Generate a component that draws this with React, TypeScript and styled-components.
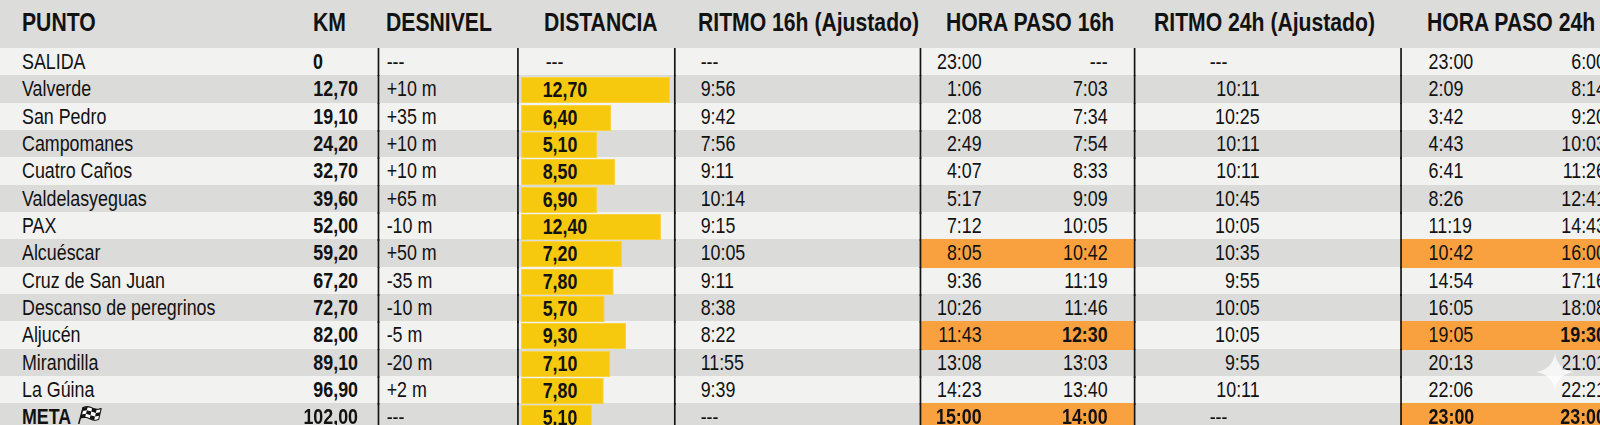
import React from 'react';
import styled, { createGlobalStyle, css } from 'styled-components';

// The printed table uses a condensed grotesque. No condensed face is installed,
// so the table is laid out wide and squeezed horizontally by S.
const S = 0.83;
const u = (px: number) => `${(px / S).toFixed(2)}px`;

const GlobalStyle = createGlobalStyle`
  body {
    margin: 0;
    background: #f2f2f1;
    overflow: hidden;
    font-family: "Liberation Sans", Arial, sans-serif;
    color: #121212;
  }
`;

interface Leg {
  name: string;
  km: string;
  des: string;
  dist?: string;
  bar?: number;
  r16: string;
  h16: [string, string];
  r24: string;
  h24: [string, string];
  hl?: boolean;
  bold?: [boolean, boolean];
  meta?: boolean;
}

const legs: Leg[] = [
  { name: 'SALIDA', km: '0', des: '---', r16: '---', h16: ['23:00', '---'], r24: '---', h24: ['23:00', '6:00'] },
  { name: 'Valverde', km: '12,70', des: '+10 m', dist: '12,70', bar: 148, r16: '9:56', h16: ['1:06', '7:03'], r24: '10:11', h24: ['2:09', '8:14'] },
  { name: 'San Pedro', km: '19,10', des: '+35 m', dist: '6,40', bar: 89, r16: '9:42', h16: ['2:08', '7:34'], r24: '10:25', h24: ['3:42', '9:20'] },
  { name: 'Campomanes', km: '24,20', des: '+10 m', dist: '5,10', bar: 75, r16: '7:56', h16: ['2:49', '7:54'], r24: '10:11', h24: ['4:43', '10:03'] },
  { name: 'Cuatro Caños', km: '32,70', des: '+10 m', dist: '8,50', bar: 93, r16: '9:11', h16: ['4:07', '8:33'], r24: '10:11', h24: ['6:41', '11:26'] },
  { name: 'Valdelasyeguas', km: '39,60', des: '+65 m', dist: '6,90', bar: 75, r16: '10:14', h16: ['5:17', '9:09'], r24: '10:45', h24: ['8:26', '12:41'] },
  { name: 'PAX', km: '52,00', des: '-10 m', dist: '12,40', bar: 139, r16: '9:15', h16: ['7:12', '10:05'], r24: '10:05', h24: ['11:19', '14:43'] },
  { name: 'Alcuéscar', km: '59,20', des: '+50 m', dist: '7,20', bar: 100, r16: '10:05', h16: ['8:05', '10:42'], r24: '10:35', h24: ['10:42', '16:00'], hl: true },
  { name: 'Cruz de San Juan', km: '67,20', des: '-35 m', dist: '7,80', bar: 92, r16: '9:11', h16: ['9:36', '11:19'], r24: '9:55', h24: ['14:54', '17:16'] },
  { name: 'Descanso de peregrinos', km: '72,70', des: '-10 m', dist: '5,70', bar: 83, r16: '8:38', h16: ['10:26', '11:46'], r24: '10:05', h24: ['16:05', '18:08'] },
  { name: 'Aljucén', km: '82,00', des: '-5 m', dist: '9,30', bar: 104, r16: '8:22', h16: ['11:43', '12:30'], r24: '10:05', h24: ['19:05', '19:30'], hl: true, bold: [false, true] },
  { name: 'Mirandilla', km: '89,10', des: '-20 m', dist: '7,10', bar: 88, r16: '11:55', h16: ['13:08', '13:03'], r24: '9:55', h24: ['20:13', '21:01'] },
  { name: 'La Gúina', km: '96,90', des: '+2 m', dist: '7,80', bar: 82, r16: '9:39', h16: ['14:23', '13:40'], r24: '10:11', h24: ['22:06', '22:21'] },
  { name: 'META', km: '102,00', des: '---', dist: '5,10', bar: 70, r16: '---', h16: ['15:00', '14:00'], r24: '---', h24: ['23:00', '23:00'], hl: true, bold: [true, true], meta: true },
];

const COLS = [290, 88, 139, 157, 246, 214, 266, 240].map(u).join(' ');

const Page = styled.div`
  position: relative;
  width: 1600px;
  height: 425px;
  overflow: hidden;
`;

const Table = styled.div`
  width: ${u(1640)};
  transform: scaleX(${S});
  transform-origin: 0 0;
`;

const HeaderRow = styled.div`
  display: grid;
  grid-template-columns: ${COLS};
  height: 48px;
  background: #dcdcda;
`;

const HeadCell = styled.div<{ $pad: number }>`
  display: flex;
  align-items: center;
  padding-left: ${(p) => u(p.$pad)};
  padding-bottom: 3px;
  font-size: 25.5px;
  font-weight: 700;
  white-space: nowrap;
`;

const Row = styled.div<{ $shade: boolean }>`
  display: grid;
  grid-template-columns: ${COLS};
  height: 27.33px;
  background: ${(p) => (p.$shade ? '#dbdbda' : '#f2f2f1')};
  font-size: 21.5px;
`;

const Cell = styled.div<{ $line?: boolean }>`
  display: flex;
  align-items: center;
  box-sizing: border-box;
  white-space: nowrap;
  ${(p) =>
    p.$line &&
    css`
      border-left: ${u(2)} solid #141414;
    `}
`;

const NameCell = styled(Cell)<{ $bold?: boolean }>`
  padding-left: ${u(22)};
  gap: ${u(6)};
  font-weight: ${(p) => (p.$bold ? 700 : 400)};
`;

const KmCell = styled(Cell)<{ $left?: boolean }>`
  font-weight: 700;
  justify-content: ${(p) => (p.$left ? 'flex-start' : 'flex-end')};
  padding-left: ${u(23)};
  padding-right: ${u(20)};
`;

const DesCell = styled(Cell)`
  padding-left: ${u(7)};
`;

const DistCell = styled(Cell)`
  padding: 2px 0 1px ${u(3)};
  align-items: stretch;
`;

const Bar = styled.div`
  display: flex;
  align-items: center;
  box-sizing: border-box;
  padding-left: ${u(21)};
  padding-top: 1px;
  background: #f6c90f;
  box-shadow: inset 0 0 0 1px #f8d443;
  font-weight: 700;
`;

const Dash = styled.div`
  display: flex;
  align-items: center;
  padding-left: ${u(24)};
`;

const Ritmo16Cell = styled(Cell)`
  padding-left: ${u(25)};
`;

const HoraCell = styled(Cell)<{ $hl?: boolean }>`
  background: ${(p) => (p.$hl ? '#f9a03f' : 'transparent')};
`;

const Hora16Cell = styled(HoraCell)`
  display: grid;
  grid-template-columns: ${u(60)} ${u(126)};
  align-items: center;
  justify-items: end;
`;

const Hora24Cell = styled(HoraCell)`
  justify-content: space-between;
  padding-left: ${u(27)};
  padding-right: ${u(34)};
`;

const Time = styled.span<{ $bold?: boolean }>`
  font-weight: ${(p) => (p.$bold ? 700 : 400)};
`;

const Ritmo24Cell = styled(Cell)`
  padding-left: ${u(74)};
`;

const Ritmo24Value = styled.span<{ $dash?: boolean }>`
  display: inline-block;
  width: ${u(50)};
  text-align: ${(p) => (p.$dash ? 'left' : 'right')};
`;

const FlagSvg = styled.svg`
  align-self: flex-start;
  margin-top: 3px;
  flex: none;
`;

const Sparkle = styled.svg`
  position: absolute;
  left: 1536px;
  top: 353px;
  width: 38px;
  height: 38px;
  opacity: 0.75;
`;

// checkered flag: a waving quad split into a 4x3 checker grid
const FLAG_QUAD = { tl: [6, 1.5], tr: [24, 2.5], br: [21.5, 13.5], bl: [3.5, 12] };
const lerp = (a: number[], b: number[], t: number) => [a[0] + (b[0] - a[0]) * t, a[1] + (b[1] - a[1]) * t];
const flagPoint = (x: number, y: number) => {
  const top = lerp(FLAG_QUAD.tl, FLAG_QUAD.tr, x);
  const bottom = lerp(FLAG_QUAD.bl, FLAG_QUAD.br, x);
  const p = lerp(top, bottom, y);
  const wave = Math.sin(x * Math.PI * 2) * 1.1;
  return `${p[0].toFixed(2)},${(p[1] - wave).toFixed(2)}`;
};

function FinishFlag() {
  const cells: string[] = [];
  const cols = 4;
  const rows = 3;
  for (let c = 0; c < cols; c++) {
    for (let r = 0; r < rows; r++) {
      if ((c + r) % 2 === 0) {
        const x0 = c / cols;
        const x1 = (c + 1) / cols;
        const y0 = r / rows;
        const y1 = (r + 1) / rows;
        cells.push([flagPoint(x0, y0), flagPoint(x1, y0), flagPoint(x1, y1), flagPoint(x0, y1)].join(' '));
      }
    }
  }
  const outline: string[] = [];
  for (let i = 0; i <= 8; i++) outline.push(flagPoint(i / 8, 0));
  for (let i = 8; i >= 0; i--) outline.push(flagPoint(i / 8, 1));
  return (
    <FlagSvg width={u(25)} height="18" viewBox="0 0 25 18" preserveAspectRatio="none" fill="none">
      <path d="M1.5 18 L6 1.5" stroke="#141414" strokeWidth="1.5" strokeLinecap="round" />
      <polygon points={outline.join(' ')} fill="#fff" />
      {cells.map((pts) => (
        <polygon key={pts} points={pts} fill="#141414" />
      ))}
      <polygon points={outline.join(' ')} stroke="#141414" strokeWidth="1.1" strokeLinejoin="round" />
    </FlagSvg>
  );
}

export default function App() {
  return (
    <>
      <GlobalStyle />
      <Page>
        <Table>
          <HeaderRow>
            <HeadCell $pad={22}>PUNTO</HeadCell>
            <HeadCell $pad={23}>KM</HeadCell>
            <HeadCell $pad={8}>DESNIVEL</HeadCell>
            <HeadCell $pad={27}>DISTANCIA</HeadCell>
            <HeadCell $pad={24}>RITMO 16h (Ajustado)</HeadCell>
            <HeadCell $pad={26}>HORA PASO 16h</HeadCell>
            <HeadCell $pad={20}>RITMO 24h (Ajustado)</HeadCell>
            <HeadCell $pad={27}>HORA PASO 24h</HeadCell>
          </HeaderRow>
          {legs.map((leg, i) => {
            const bold = leg.bold ?? [false, false];
            return (
              <Row key={leg.name} $shade={i % 2 === 1}>
                <NameCell $bold={leg.meta}>
                  {leg.name}
                  {leg.meta && <FinishFlag />}
                </NameCell>
                <KmCell $left={leg.km === '0'}>{leg.km}</KmCell>
                <DesCell $line>{leg.des}</DesCell>
                <DistCell $line>
                  {leg.dist ? (
                    <Bar style={{ width: u(leg.bar ?? 0) }}>{leg.dist}</Bar>
                  ) : (
                    <Dash>---</Dash>
                  )}
                </DistCell>
                <Ritmo16Cell $line>{leg.r16}</Ritmo16Cell>
                <Hora16Cell $line $hl={leg.hl}>
                  <Time $bold={bold[0]}>{leg.h16[0]}</Time>
                  <Time $bold={bold[1]}>{leg.h16[1]}</Time>
                </Hora16Cell>
                <Ritmo24Cell $line>
                  <Ritmo24Value $dash={leg.r24 === '---'}>{leg.r24}</Ritmo24Value>
                </Ritmo24Cell>
                <Hora24Cell $line $hl={leg.hl}>
                  <Time $bold={bold[0]}>{leg.h24[0]}</Time>
                  <Time $bold={bold[1]}>{leg.h24[1]}</Time>
                </Hora24Cell>
              </Row>
            );
          })}
        </Table>
        <Sparkle viewBox="0 0 40 40">
          <path
            d="M20 0 C21 11 29 19 40 20 C29 21 21 29 20 40 C19 29 11 21 0 20 C11 19 19 11 20 0 Z"
            fill="#ffffff"
          />
        </Sparkle>
      </Page>
    </>
  );
}
